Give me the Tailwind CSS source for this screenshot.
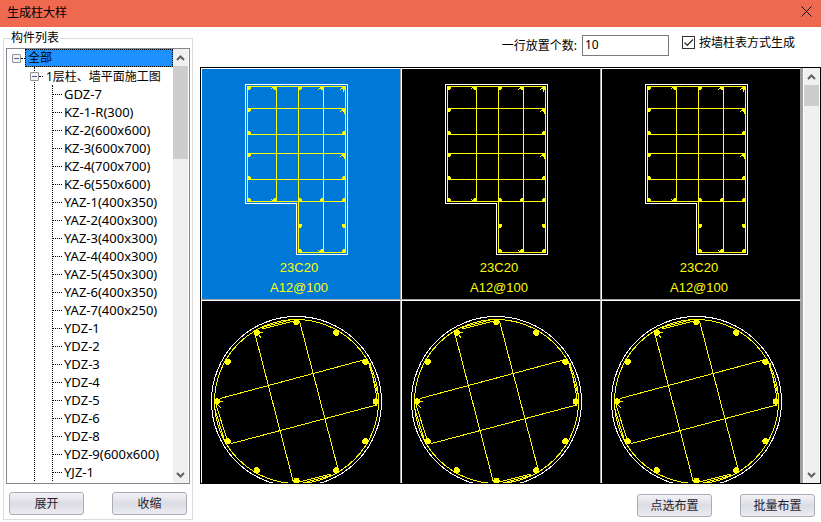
<!DOCTYPE html>
<html lang="zh-CN">
<head>
  <meta charset="UTF-8" />
  <meta name="viewport" content="width=device-width, initial-scale=1.0" />
  <title>生成柱大样</title>
  <script src="https://cdn.jsdelivr.net/npm/@tailwindcss/browser@4"></script>
</head>
<body class="flex h-screen flex-col bg-white font-['Noto_Sans','Noto_Sans_CJK_SC',sans-serif] text-xs text-black">
  <!-- 标题栏 -->
  <header class="flex h-[27px] shrink-0 items-center justify-between bg-[#ef6950] pr-[5px] pl-[7px]">
    <h1 class="pb-[2px]">生成柱大样</h1>
    <button type="button" aria-label="关闭" class="mb-1 p-1">
      <svg class="size-[11px]" viewBox="0 0 11 11" fill="none" stroke="#000"><path d="M.5.5l10 10M10.500.5l-10 10" /></svg>
    </button>
  </header>

  <main class="flex min-h-0 flex-1">
    <!-- 构件列表 -->
    <fieldset class="mt-1 mb-[2px] ml-[3px] flex w-[190px] shrink-0 flex-col border border-[#dcdcdc] px-[2px] pt-[3px] pb-1">
      <legend class="ml-[4px] px-[1px] leading-[14px]">构件列表</legend>
      <div class="flex min-h-0 flex-1 border border-[#828790]">
        <ul id="tree" role="tree" class="min-w-0 flex-1 overflow-hidden whitespace-nowrap">
          <li role="treeitem" aria-expanded="true">
            <div class="flex h-[18px] items-center pl-[5px]">
              <button type="button" aria-label="折叠" class="size-[9px] shrink-0 rounded-[1px] border border-[#919191] bg-[#f4f4f4]">
                <span class="mx-[1px] block h-px bg-[#4b63a7]"></span>
              </button>
              <span class="h-px w-1 shrink-0 border-t border-dotted border-black"></span>
              <span class="flex-1 border border-dotted border-black bg-[#1e90ff] pl-[2px] leading-4">全部</span>
            </div>
            <ul role="group" class="pl-[27px]">
              <li role="treeitem" aria-expanded="true" class="relative">
                <span class="absolute inset-y-0 left-0 w-px border-l border-dotted border-black"></span>
                <div class="relative flex h-[18px] items-center">
                  <button type="button" aria-label="折叠" class="-ml-1 size-[9px] shrink-0 rounded-[1px] border border-[#919191] bg-[#f4f4f4]">
                    <span class="mx-[1px] block h-px bg-[#4b63a7]"></span>
                  </button>
                  <span class="h-px w-1 shrink-0 border-t border-dotted border-black"></span>
                  <span class="pt-[2px] pl-[3px]">1层柱、墙平面施工图</span>
                </div>
                <ul id="leaves" role="group" class="ml-[18px] border-l border-dotted border-black text-[13px]"></ul>
              </li>
            </ul>
          </li>
        </ul>
        <div class="mr-px flex w-[15px] shrink-0 flex-col bg-[#f0f0f0]">
          <button type="button" aria-label="向上" class="flex h-[17px] items-center justify-center">
            <svg class="h-[6px] w-[9px]" viewBox="0 0 9 6" fill="none" stroke="#606060" stroke-width="2"><path d="M1 5l3.500-3.500L8 5" /></svg>
          </button>
          <div class="h-[93px] bg-[#cdcdcd]"></div>
          <button type="button" aria-label="向下" class="mt-auto flex h-[17px] items-center justify-center">
            <svg class="h-[6px] w-[9px]" viewBox="0 0 9 6" fill="none" stroke="#606060" stroke-width="2"><path d="M1 1l3.500 3.500L8 1" /></svg>
          </button>
        </div>
      </div>
      <div class="mt-2 flex justify-between px-[3px]">
        <button type="button" class="h-[23px] w-[75px] rounded-[3px] border border-[#a9adb8] bg-linear-to-b from-[#f3f3f6] via-[#dcdce4] to-[#ececf1] text-[#1e1e32]">展开</button>
        <button type="button" class="h-[23px] w-[75px] rounded-[3px] border border-[#a9adb8] bg-linear-to-b from-[#f3f3f6] via-[#dcdce4] to-[#ececf1] text-[#1e1e32]">收缩</button>
      </div>
    </fieldset>

    <!-- 大样预览 -->
    <section class="ml-[7px] flex min-w-0 flex-1 flex-col">
      <div class="flex h-10 shrink-0 items-center justify-end pr-[26px] pb-[3px]">
        <label for="perRow" class="mr-[5px]">一行放置个数:</label>
        <input id="perRow" type="text" value="10" class="mr-[13px] h-[21px] w-[87px] border border-[#7a7a7a] px-[2px] pb-[3px] outline-none" />
        <label class="mb-[6px] flex items-center gap-1">
          <span class="grid size-[13px]">
            <input type="checkbox" checked class="col-start-1 row-start-1 size-[13px] appearance-none border border-[#333]" />
            <svg class="pointer-events-none col-start-1 row-start-1 size-[13px]" viewBox="0 0 13 13" fill="none" stroke="#333" stroke-width="1.3"><path d="M2.500 6.500l2.800 2.800L11 3.500" /></svg>
          </span>
          按墙柱表方式生成
        </label>
      </div>

      <div class="flex min-h-0 flex-1 border border-black">
        <div id="grid" class="grid min-w-0 flex-1 auto-rows-[232px] grid-cols-3 overflow-hidden bg-black"></div>
        <div class="w-[2px] bg-[#a0a0a0]"></div>
        <div class="mr-px ml-px flex w-[15px] shrink-0 flex-col bg-[#f0f0f0]">
          <button type="button" aria-label="向上" class="flex h-[17px] items-center justify-center">
            <svg class="h-[6px] w-[9px]" viewBox="0 0 9 6" fill="none" stroke="#606060" stroke-width="2"><path d="M1 5l3.500-3.500L8 5" /></svg>
          </button>
          <div class="h-[21px] bg-[#cdcdcd]"></div>
          <button type="button" aria-label="向下" class="mt-auto flex h-[17px] items-center justify-center">
            <svg class="h-[6px] w-[9px]" viewBox="0 0 9 6" fill="none" stroke="#606060" stroke-width="2"><path d="M1 1l3.500 3.500L8 1" /></svg>
          </button>
        </div>
      </div>

      <div class="mt-[10px] mb-[5px] flex shrink-0 justify-end gap-7 pr-[6px]">
        <button type="button" class="h-[23px] w-[75px] rounded-[3px] border border-[#a9adb8] bg-linear-to-b from-[#f3f3f6] via-[#dcdce4] to-[#ececf1] text-[#1e1e32]">点选布置</button>
        <button type="button" class="h-[23px] w-[75px] rounded-[3px] border border-[#a9adb8] bg-linear-to-b from-[#f3f3f6] via-[#dcdce4] to-[#ececf1] text-[#1e1e32]">批量布置</button>
      </div>
    </section>
  </main>

  <script>
    // --- 构件 ---
    const components = [
      "GDZ-7", "KZ-1-R(300)", "KZ-2(600x600)", "KZ-3(600x700)", "KZ-4(700x700)", "KZ-6(550x600)",
      "YAZ-1(400x350)", "YAZ-2(400x300)", "YAZ-3(400x300)", "YAZ-4(400x300)", "YAZ-5(450x300)",
      "YAZ-6(400x350)", "YAZ-7(400x250)", "YDZ-1", "YDZ-2", "YDZ-3", "YDZ-4", "YDZ-5", "YDZ-6",
      "YDZ-8", "YDZ-9(600x600)", "YJZ-1"
    ];

    document.getElementById("leaves").innerHTML = components.map(name => `
      <li role="treeitem" class="flex h-[18px] items-center gap-[2px] leading-[18px]">
        <span class="h-px w-[9px] border-t border-dotted border-black"></span>${name}
      </li>
    `).join("");

    // --- L 形柱 ---
    // 角筋: x, y, 水平方向, 垂直方向
    const corners = [
      [45, 17, 1, 1], [75, 17, -1, 1], [96, 17, 1, 1], [122, 17, -1, 1], [144, 17, -1, 1],
      [45, 39, 1, 1], [144, 39, -1, 1], [45, 66, 1, -1], [144, 66, -1, -1],
      [45, 84, 1, 1], [144, 84, -1, 1], [45, 111, 1, -1], [144, 111, -1, -1],
      [45, 133, 1, -1], [75, 133, -1, -1], [96, 133, 1, -1], [122, 133, -1, -1], [144, 133, -1, -1],
      [96, 184, 1, -1], [122, 184, -1, -1], [144, 184, -1, -1]
    ];
    // 弯钩
    const hooks = [[69, 19, 1], [116, 20, 1], [138, 20, 1], [138, 42, 1], [138, 87, 1], [69, 130, -1], [116, 181, -1]];

    const lColumn = `
      <svg class="mx-auto block h-[230px] w-[198px]" viewBox="0 0 198 230" shape-rendering="crispEdges">
        <path d="M43.500 15.500H145.500V185.500H94.500V134.500H43.500Z" fill="none" stroke="#fff" />
        <path d="M45.500 17.500H143.500V183.500H96.500V132.500H45.500ZM74.500 17.500V132.500M96.500 17.500V132.500M121.500 17.500V183.500M45.500 39.500H143.500M45.500 65.500H143.500M45.500 84.500H143.500M45.500 110.500H143.500M96.500 132.500H143.500" fill="none" stroke="#ff0" />
        <g fill="#ff0">
          ${corners.map(([x, y, h, v]) => `<path d="M${x} ${y}h${4 * h}v${3 * v}h${-h}v${v}h${-3 * h}z" />`).join("")}
          ${hooks.map(([x, y, v]) => `<path d="M${x} ${y}h1v1h-1zM${x + 1} ${y - v}h2v1h-2z" />`).join("")}
          <path d="M141 20h1v3h-1zM142 43h1v2h-1zM142 88h1v2h-1z" />
          <path d="M96 155h4v3h-1v1h-3zM144 155h-4v3h1v1h3z" />
        </g>
        <g fill="#ff0" text-anchor="middle" class="font-['Liberation_Sans',sans-serif] text-[13px]">
          <text x="97" y="203">23C20</text>
          <text x="97" y="223">A12@100</text>
        </g>
      </svg>`;

    // --- 圆柱 ---
    const cx = 94.5, cy = 100.5;
    const bars = Array.from({ length: 12 }, (_, i) => {
      const a = i * Math.PI / 6;
      return `<circle cx="${cx + 79.5 * Math.cos(a)}" cy="${cy + 79.5 * Math.sin(a)}" r="3.1" />`;
    }).join("");

    const roundColumn = `
      <svg class="mx-auto block h-[230px] w-[198px]" viewBox="0 0 198 230" shape-rendering="crispEdges">
        <circle cx="${cx}" cy="${cy}" r="85" fill="none" stroke="#fff" />
        <circle cx="${cx}" cy="${cy}" r="82" fill="none" stroke="#ff0" />
        <path d="M53 33L91.500 181.500M136 168L97.500 20M18 97.500L163.500 58.500M174.500 104L29.500 142.500" fill="none" stroke="#ff0" />
        <path d="M56 27.500L92 18M60 28L92 20M166 60L177 96M168 62L175 97M12 105L23 141M14 104L25 138M97 183L133 173.500M97 181L129 173" fill="none" stroke="#ff0" />
        <path d="M58 31h3M57 34l2 3M18 100h3M16 104l3 3" fill="none" stroke="#ff0" />
        <g fill="#ff0">${bars}</g>
      </svg>`;

    // --- 预览格 ---
    const cells = [lColumn, lColumn, lColumn, roundColumn, roundColumn, roundColumn];
    document.getElementById("grid").innerHTML = cells.map((drawing, i) => `
      <div class="border-t border-r border-b border-l border-t-white border-r-[#a0a0a0] border-b-[#a0a0a0] border-l-white ${i === 0 ? "bg-[#0078d7]" : "bg-black"}">${drawing}</div>
    `).join("");
  </script>
</body>
</html>
